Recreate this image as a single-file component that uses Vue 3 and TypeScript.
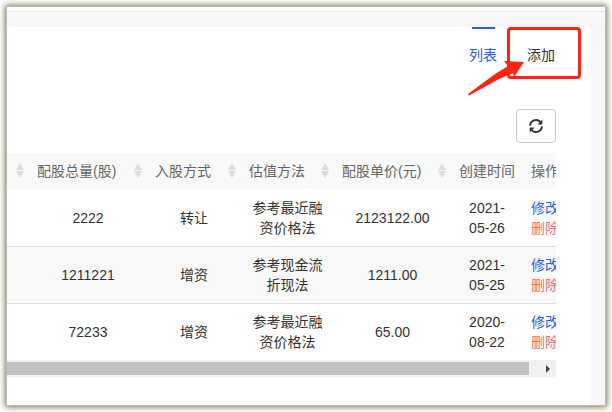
<script setup lang="ts">
interface Row {
  total: string
  mode: string
  method: string
  price: string
  date: string
}

const columns: { label: string; sortable: boolean }[] = [
  { label: '', sortable: true },
  { label: '配股总量(股)', sortable: true },
  { label: '入股方式', sortable: true },
  { label: '估值方法', sortable: true },
  { label: '配股单价(元)', sortable: true },
  { label: '创建时间', sortable: false },
  { label: '操作', sortable: false },
]

const rows: Row[] = [
  { total: '2222', mode: '转让', method: '参考最近融资价格法', price: '2123122.00', date: '2021-05-26' },
  { total: '1211221', mode: '增资', method: '参考现金流折现法', price: '1211.00', date: '2021-05-25' },
  { total: '72233', mode: '增资', method: '参考最近融资价格法', price: '65.00', date: '2020-08-22' },
]
</script>

<template>
  <div class="page">
    <div class="frame">
      <div class="topbar"></div>
      <main class="content">
        <section class="card">
          <nav class="tabs">
            <a class="tab active" href="#list">列表</a>
            <a class="tab" href="#add">
              添加
              <span class="callout"></span>
              <svg class="arrow" viewBox="0 0 58 38" aria-hidden="true">
                <path d="M57 4L37 3L41 8L28 16L1 36L2 37.500L32 21L46 15L47 19Z" fill="#ff2312" />
              </svg>
            </a>
          </nav>
          <div class="toolbar">
            <button class="refresh" type="button" aria-label="刷新">
              <svg viewBox="0 0 14 14" aria-hidden="true">
                <g fill="none" stroke="#333" stroke-width="1.900">
                  <path d="M1.100 6.600A5.900 5.900 0 0 1 11.300 2.900" />
                  <path d="M12.900 7.400A5.900 5.900 0 0 1 2.700 11.100" />
                </g>
                <path d="M13.300 .600V5.400H8.500ZM.700 13.400V8.600H5.500Z" fill="#333" />
              </svg>
            </button>
          </div>
          <div class="table-wrap">
            <table>
              <colgroup>
                <col />
                <col class="w-total" />
                <col class="w-mode" />
                <col class="w-method" />
                <col class="w-price" />
                <col class="w-date" />
                <col class="w-action" />
              </colgroup>
              <thead>
                <tr>
                  <th v-for="(c, i) in columns" :key="i" scope="col">
                    <div class="head">
                      <span>{{ c.label }}</span>
                      <svg v-if="c.sortable" class="sort" viewBox="0 0 8 16" aria-hidden="true">
                        <path d="M4 0L8 7H0ZM0 8H8L4 15Z" fill="#dcdcdc" />
                      </svg>
                    </div>
                  </th>
                </tr>
              </thead>
              <tbody>
                <tr v-for="r in rows" :key="r.date">
                  <td></td>
                  <td>{{ r.total }}</td>
                  <td>{{ r.mode }}</td>
                  <td>{{ r.method }}</td>
                  <td>{{ r.price }}</td>
                  <td>{{ r.date }}</td>
                  <td class="actions">
                    <a class="edit" href="#edit">修改</a>
                    <a class="remove" href="#remove">删除</a>
                  </td>
                </tr>
              </tbody>
            </table>
          </div>
          <div class="scrollbar">
            <div class="thumb"></div>
            <svg class="scroll-arrow" viewBox="0 0 4 8" aria-hidden="true">
              <path d="M0 0L4 4L0 8Z" fill="#444" />
            </svg>
          </div>
        </section>
      </main>
    </div>
  </div>
</template>

<style>
body {
  margin: 0;
  background: #fffffb;
}
</style>

<style scoped>
* {
  box-sizing: border-box;
}

.page {
  display: flex;
  min-height: 100vh;
  padding: 6px;
  font: 14px/20px 'Liberation Sans', 'Noto Sans CJK SC', sans-serif;
  color: #333;
}

.frame {
  flex: 1;
  min-width: 0;
  display: flex;
  flex-direction: column;
  overflow: hidden;
  background: #fff;
  border: 1px solid #b9b9b9;
  box-shadow: 0 0 6px 1px #76765a;
}

.topbar {
  height: 5px;
  border-bottom: 1px solid #e6e6e6;
}

.content {
  flex: 1;
  display: flex;
  padding: 15px 14px 0 0;
  background: linear-gradient(#fafafa, #f5f5f5 15px, #f8f8f8 40px);
}

.card {
  flex: 1;
  min-width: 0;
  padding-right: 35px;
  background: #fff;
  border-top-right-radius: 4px;
}

.tabs {
  display: flex;
  justify-content: flex-end;
  gap: 30px;
  padding-right: 1px;
}

.tab {
  position: relative;
  line-height: 56px;
  color: #333;
  text-decoration: none;
}

.tab.active {
  color: #2b5bf5;
}

.tab.active::before {
  content: '';
  position: absolute;
  top: 0;
  left: 3px;
  right: 2px;
  height: 2px;
  background: #2b5bf5;
}

.callout {
  position: absolute;
  top: 0;
  left: -20px;
  width: 74px;
  height: 52px;
  border: 3px solid #ff2312;
  border-radius: 4px;
}

.arrow {
  position: absolute;
  top: 31px;
  left: -60px;
  width: 58px;
  height: 38px;
}

.toolbar {
  display: flex;
  justify-content: flex-end;
  padding: 26px 0 10px;
}

.refresh {
  display: flex;
  align-items: center;
  justify-content: center;
  width: 40px;
  height: 34px;
  padding: 0 1px 1px 0;
  background: #fff;
  border: 1px solid #ccc;
  border-radius: 4px;
}

.refresh svg {
  width: 14px;
  height: 14px;
}

.table-wrap {
  overflow: hidden;
}

table {
  width: calc(100% + 11px);
  table-layout: fixed;
  border-collapse: separate;
  border-spacing: 0;
}

.w-total {
  width: 118px;
}

.w-mode {
  width: 94px;
}

.w-method {
  width: 93px;
}

.w-price {
  width: 117px;
}

.w-date {
  width: 72px;
}

.w-action {
  width: 44px;
}

th {
  padding: 8px 5px 8px 8px;
  font-weight: 400;
  color: #666;
  background: #f9f9f9;
  white-space: nowrap;
}

.head {
  display: flex;
  align-items: center;
  justify-content: space-between;
  height: 20px;
}

.sort {
  flex: none;
  width: 8px;
  height: 16px;
}

td {
  padding: 8px;
  text-align: center;
  vertical-align: middle;
  border-top: 1px solid #ddd;
}

tbody tr:first-child td {
  border-top-color: transparent;
}

tbody tr:nth-child(even) td {
  background: #f9f9f9;
}

.actions a {
  display: block;
  text-decoration: none;
}

.edit {
  color: #2b5bf5;
}

.remove {
  color: #f56c6c;
}

.scrollbar {
  display: flex;
  align-items: center;
  height: 17px;
  padding-right: 6px;
  background: #f1f1f1;
}

.thumb {
  flex: 1;
  height: 13px;
  margin-right: 17px;
  background: #c1c1c1;
}

.scroll-arrow {
  width: 4px;
  height: 8px;
}
</style>
